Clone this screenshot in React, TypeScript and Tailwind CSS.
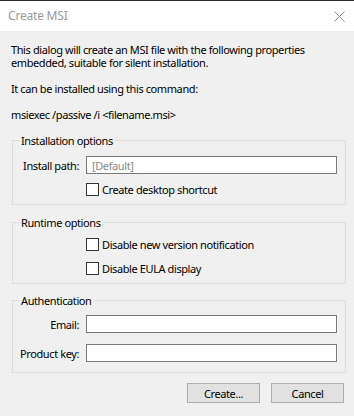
import React from "react";

const font = { fontFamily: '"Noto Sans", "Liberation Sans", sans-serif' };

function Checkbox({ label }: { label: string }) {
  return (
    <div className="flex items-center h-[13px]">
      <div className="w-[13px] h-[13px] border border-[#333333] bg-white box-border" />
      <span className="ml-[3px] leading-[13px] text-black whitespace-nowrap">{label}</span>
    </div>
  );
}

function Group({
  title,
  className,
  children,
}: {
  title: string;
  className: string;
  children: React.ReactNode;
}) {
  return (
    <div className={"relative ml-[12px] w-[334px] border border-[#dcdcdc] " + className}>
      <span className="absolute left-[6px] top-[-7px] px-[2px] bg-[#f0f0f0] leading-[13px] text-black whitespace-nowrap">
        {title}
      </span>
      {children}
    </div>
  );
}

function Field({ label, value }: { label: string; value?: string }) {
  return (
    <div className="flex items-center">
      <div className="w-[66px] text-right leading-[13px] text-black whitespace-nowrap">{label}</div>
      <div className="ml-[7px] w-[251px] h-[18px] border border-[#7a7a7a] bg-white box-border flex items-center px-[5px] text-[#8a8a8a] leading-[13px]">
        {value}
      </div>
    </div>
  );
}

export default function App() {
  return (
    <div
      className="w-[354px] h-[416px] bg-[#f0f0f0] text-[11px] tracking-[-0.4px] overflow-hidden"
      style={font}
    >
      <div className="h-[31px] bg-white border-t border-[#2b2b2b] flex items-center justify-between">
        <span className="ml-[8px] text-[12px] tracking-[-0.2px] text-[#999999]">Create MSI</span>
        <svg width="11" height="11" viewBox="0 0 11 11" className="mr-[9px]">
          <path d="M0.5 0.5 L10.5 10.5 M10.5 0.5 L0.5 10.5" stroke="#8a8a8a" strokeWidth="1" fill="none" />
        </svg>
      </div>
      <div className="pt-[12px] pl-[11px] text-black leading-[13px]">
        <p className="whitespace-nowrap">This dialog will create an MSI file with the following properties</p>
        <p className="whitespace-nowrap">embedded, suitable for silent installation.</p>
        <p className="mt-[13px]">It can be installed using this command:</p>
        <p className="mt-[13px]">msiexec /passive /i &lt;filename.msi&gt;</p>
      </div>
      <Group title="Installation options" className="mt-[19px] pt-[15px] pb-[8px]">
        <Field label="Install path:" value="[Default]" />
        <div className="mt-[9px] ml-[73px]">
          <Checkbox label="Create desktop shortcut" />
        </div>
      </Group>
      <Group title="Runtime options" className="mt-[17px] pt-[15px] pb-[8px]">
        <div className="ml-[73px] flex flex-col gap-[11px]">
          <Checkbox label="Disable new version notification" />
          <Checkbox label="Disable EULA display" />
        </div>
      </Group>
      <Group title="Authentication" className="mt-[16px] pt-[14px] pb-[10px]">
        <div className="flex flex-col gap-[11px]">
          <Field label="Email:" />
          <Field label="Product key:" />
        </div>
      </Group>
      <div className="mt-[10px] flex justify-end gap-[11px] pr-[10px]">
        <button className="w-[73px] h-[20px] border border-[#adadad] bg-[#e1e1e1] text-black leading-[13px]">
          Create...
        </button>
        <button className="w-[73px] h-[20px] border border-[#adadad] bg-[#e1e1e1] text-black leading-[13px]">
          Cancel
        </button>
      </div>
    </div>
  );
}
